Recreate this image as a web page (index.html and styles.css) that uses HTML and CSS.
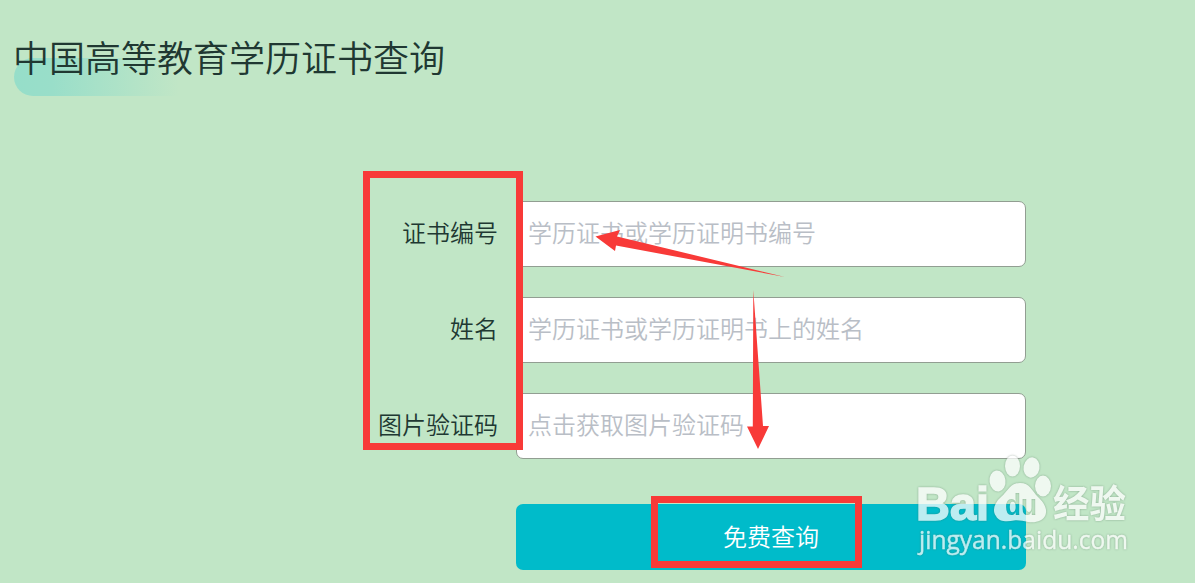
FILE: index.html
```html
<!DOCTYPE html>
<html lang="zh-CN">
<head>
  <meta charset="UTF-8" />
  <meta name="viewport" content="width=device-width, initial-scale=1.0"/>
  <title>中国高等教育学历证书查询</title>
  <link rel="stylesheet" href="styles.css">
</head>
<body>
  <h1>中国高等教育学历证书查询</h1>

  <form id="queryForm">
    <div class="row">
      <label for="zsbh">证书编号</label>
      <input type="text" id="zsbh" placeholder="学历证书或学历证明书编号">
    </div>
    <div class="row">
      <label for="xm">姓名</label>
      <input type="text" id="xm" placeholder="学历证书或学历证明书上的姓名">
    </div>
    <div class="row">
      <label for="yzm">图片验证码</label>
      <input type="text" id="yzm" placeholder="点击获取图片验证码">
    </div>
    <button type="button" id="submitBtn">免费查询</button>
  </form>

  <!-- watermark and red marks -->
  <svg class="overlay" width="1195" height="583" viewBox="0 0 1195 583">
    <defs>
      <mask id="duMask" maskUnits="userSpaceOnUse" x="980" y="440" width="90" height="90">
        <rect x="980" y="440" width="90" height="90" fill="#fff"/>
        <text class="du" x="1005" y="515" textLength="32" lengthAdjust="spacingAndGlyphs">du</text>
      </mask>
    </defs>
    <g class="watermark">
      <text class="bai" x="916" y="519.5" textLength="73" lengthAdjust="spacingAndGlyphs">Bai</text>
      <g mask="url(#duMask)">
        <ellipse cx="997.5" cy="481" rx="8" ry="10.5" transform="rotate(-8 997.5 481)"/>
        <ellipse cx="1012.5" cy="466" rx="7.5" ry="10.5"/>
        <ellipse cx="1031.5" cy="467.5" rx="8" ry="10.2" transform="rotate(10 1031.5 467.5)"/>
        <ellipse cx="1043" cy="486" rx="8" ry="10.4"/>
        <path d="M1020 483C1010 483 1008 491 1001 497C994 503 992 511 996 516C999 522 1007 522 1014 520.5C1019 520 1023 521 1028 522C1036 523 1043 521 1045.5 515C1048 507 1042 501 1038 497C1032 491 1030 483 1020 483Z"/>
      </g>
      <text class="jingyan" x="1053" y="517" textLength="73" lengthAdjust="spacingAndGlyphs">经验</text>
      <text class="url" x="919" y="549" textLength="209" lengthAdjust="spacingAndGlyphs">jingyan.baidu.com</text>
    </g>
    <g class="frame">
      <rect x="366.5" y="174.5" width="153" height="272"/>
      <rect x="654.5" y="499.5" width="204" height="65"/>
    </g>
    <g class="arrow">
      <path d="M595.5 236.5L620 230L617 236.5L785 277L616 245.5L615 251Z"/>
      <path d="M753.3 290L752.8 426.5H747L758 449L769 426H763Z"/>
    </g>
  </svg>
</body>
</html>
```

FILE: styles.css
```css
:root {
  --bg: #c1e6c6;
  --text: #203832;
  --primary: #00bbca;
  --mark: #f83a38;
}

body {
  margin: 0;
  padding: 32px 0 0 13px;
  box-sizing: border-box;
  width: 1195px;
  height: 583px;
  overflow: hidden;
  position: relative;
  z-index: 0;
  background: var(--bg);
  color: var(--text);
  font-family: "Noto Sans CJK SC", sans-serif;
  font-weight: 350;
}

h1 {
  margin: 0;
  width: 432px;
  height: 64px;
  line-height: 48px;
  font-size: 36px;
  font-weight: 350;
  white-space: nowrap;
  position: relative;
}

h1::before {
  content: "";
  position: absolute;
  left: 1px;
  bottom: 0;
  z-index: -1;
  width: 180px;
  height: 38px;
  border-radius: 19px 0 0 19px;
  background: linear-gradient(90deg, #96dec9 0, #99dec9 38px, rgba(193,230,198,0) 165px);
}

#queryForm {
  width: 663px;
  margin: 105px 0 0 350px;
  display: flex;
  flex-direction: column;
  gap: 30px;
}

.row {
  display: flex;
  align-items: center;
  justify-content: space-between;
}

label {
  width: 135px;
  padding-bottom: 4px;
  text-align: right;
  font-size: 24px;
  line-height: 36px;
  white-space: nowrap;
}

input {
  width: 510px;
  height: 66px;
  box-sizing: border-box;
  margin: 0;
  padding: 0 11px 5px;
  border: 1px solid #929e92;
  border-radius: 7px;
  background: #fff;
  font: inherit;
  font-size: 24px;
}

input::placeholder {
  color: #b9bec6;
  opacity: 1;
}

#submitBtn {
  align-self: flex-end;
  width: 510px;
  height: 66px;
  margin-top: 15px;
  padding: 0 0 4px;
  border: none;
  border-radius: 7px;
  background: var(--primary);
  color: #fff;
  font: inherit;
  font-size: 24px;
}

.overlay {
  position: absolute;
  left: 0;
  top: 0;
  pointer-events: none;
}

.watermark {
  fill: #fff;
  opacity: 0.74;
  filter: drop-shadow(0 0 1px rgba(70,100,80,0.6));
}

.bai, .du {
  font-family: "Liberation Sans", sans-serif;
  font-weight: 700;
}

.bai {
  font-size: 47px;
  stroke: #fff;
  stroke-width: 1.5px;
}

.du {
  font-size: 30px;
  fill: #000;
}

.jingyan {
  font-size: 38px;
  font-weight: 700;
}

.url {
  font-family: "Open Sans", sans-serif;
  font-size: 25px;
  font-weight: 500;
  stroke: #fff;
  stroke-width: 0.4px;
}

.frame rect {
  fill: none;
  stroke: var(--mark);
  stroke-width: 7;
}

.arrow {
  fill: var(--mark);
}
```
